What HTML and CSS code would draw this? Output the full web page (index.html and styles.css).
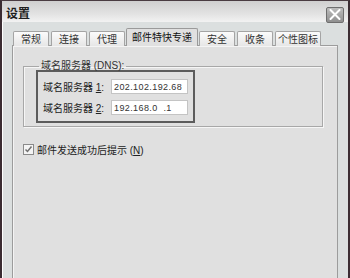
FILE: index.html
```html
<!DOCTYPE html>
<html>
<head>
    <link rel="stylesheet" href="styles.css">
</head>
<body>
    <div class="window">
        <div class="titlebar">
            <span class="title">设置</span>
            <button class="close" aria-label="关闭">
                <svg width="12" height="11" viewBox="0 0 12 11">
                    <path d="M1.5 1 L10.5 10 M10.5 1 L1.5 10" stroke="#fff" stroke-width="2" stroke-linecap="round"/>
                </svg>
            </button>
        </div>
        <div class="content">
            <div class="tabs">
                <div class="tab">常规</div>
                <div class="tab">连接</div>
                <div class="tab">代理</div>
                <div class="tab active">邮件特快专递</div>
                <div class="tab">安全</div>
                <div class="tab">收条</div>
                <div class="tab wide">个性图标</div>
            </div>
            <div class="panel">
                <fieldset class="group">
                    <legend>域名服务器 (DNS):</legend>
                    <div class="highlight">
                        <div class="row">
                            <label>域名服务器 <u>1</u>:</label>
                            <input type="text" value="202.102.192.68">
                        </div>
                        <div class="row">
                            <label>域名服务器 <u>2</u>:</label>
                            <input type="text" value="192.168.0  .1">
                        </div>
                    </div>
                </fieldset>
                <label class="check">
                    <span class="box">
                        <svg width="9" height="9" viewBox="0 0 9 9">
                            <path d="M1.5 4.5 L3.5 6.5 L7.5 1.5" fill="none" stroke="#707070" stroke-width="1.5"/>
                        </svg>
                    </span>
                    <span>邮件发送成功后提示 (<u>N</u>)</span>
                </label>
            </div>
        </div>
    </div>
</body>
</html>
```

FILE: styles.css
```css
body {
    margin: 0;
    width: 350px;
    height: 278px;
    overflow: hidden;
    background-color: #dfe2e2;
    font-family: "Liberation Sans", "Noto Sans CJK SC", sans-serif;
    font-size: 10px;
    color: #222;
}

.window {
    height: 278px;
    box-sizing: border-box;
    border-left: 2px solid #3b2d33;
    border-right: 2px solid #3b2d33;
    border-top: 1px solid #4a3c42;
    background-color: #dbdfdf;
    display: flex;
    flex-direction: column;
}

.titlebar {
    height: 21px;
    display: flex;
    align-items: center;
    justify-content: space-between;
    padding: 0 4px 0 4px;
    background: linear-gradient(#cfcfcf, #e2e2e2 60%, #f2f2f2);
}

.title {
    font-size: 12px;
    font-weight: bold;
    color: #1e1e1e;
    margin-top: 1px;
}

.close {
    width: 18px;
    height: 16px;
    padding: 0;
    margin-top: 6px;
    border: 1px solid #6e6e6e;
    border-radius: 2px;
    background: linear-gradient(#bdbdbd, #8f8f8f);
    display: flex;
    align-items: center;
    justify-content: center;
}

.content {
    flex: 1;
    display: flex;
    flex-direction: column;
    padding: 6px 9px 0 9px;
    border-left: 1px solid #fff;
}

.tabs {
    display: flex;
    align-items: flex-end;
    gap: 2px;
    height: 18px;
    padding-left: 1px;
    position: relative;
    z-index: 1;
    margin-bottom: -1px;
}

.tab {
    height: 15px;
    line-height: 15px;
    padding: 0 7px;
    box-sizing: border-box;
    border: 1px solid #a4a4a4;
    border-bottom: none;
    border-radius: 2px 2px 0 0;
    background: linear-gradient(#fbfbfb, #e6e6e6);
    color: #333;
    white-space: nowrap;
}

.tab.wide {
    padding: 0 2px;
}

.tab.active {
    height: 18px;
    line-height: 17px;
    padding: 0 5px;
    margin: 0 -1px;
    background: #e0e0e0;
    border-color: #9a9a9a;
    color: #111;
}

.panel {
    flex: 1;
    width: 326px;
    box-sizing: border-box;
    background-color: #e0e0e0;
    border: 1px solid #9c9c9c;
    border-bottom: none;
    box-shadow: inset 1px 1px 0 #f4f4f4;
    padding: 14px 0 0 10px;
}

.group {
    width: 300px;
    box-sizing: border-box;
    margin: 0;
    padding: 0 0 3px 12px;
    border: 1px solid #a8a8a8;
    box-shadow: 1px 1px 0 #f6f6f6, inset 1px 1px 0 #f6f6f6;
}

.group legend {
    padding: 0 2px;
    margin-left: 3px;
    line-height: 12px;
    color: #333;
}

.highlight {
    width: 159px;
    box-sizing: border-box;
    margin-top: -2px;
    border: 2px solid #5c5c5c;
    padding: 7px 5px 6px 5px;
    display: flex;
    flex-direction: column;
    gap: 6px;
}

.row {
    display: flex;
    align-items: center;
    justify-content: space-between;
    height: 15px;
}

.row label {
    white-space: nowrap;
    color: #222;
}

.row input {
    width: 77px;
    height: 15px;
    box-sizing: border-box;
    border: 1px solid #c4c4c4;
    background: #fff;
    padding: 0 2px;
    font-family: "Liberation Sans", sans-serif;
    font-size: 9px;
    letter-spacing: 0.4px;
    color: #333;
}

.check {
    display: flex;
    align-items: center;
    gap: 3px;
    margin-top: 15px;
    color: #222;
}

.box {
    width: 9px;
    height: 9px;
    border: 1px solid #8a8a8a;
    background: #f4f4f4;
    display: flex;
}
```
